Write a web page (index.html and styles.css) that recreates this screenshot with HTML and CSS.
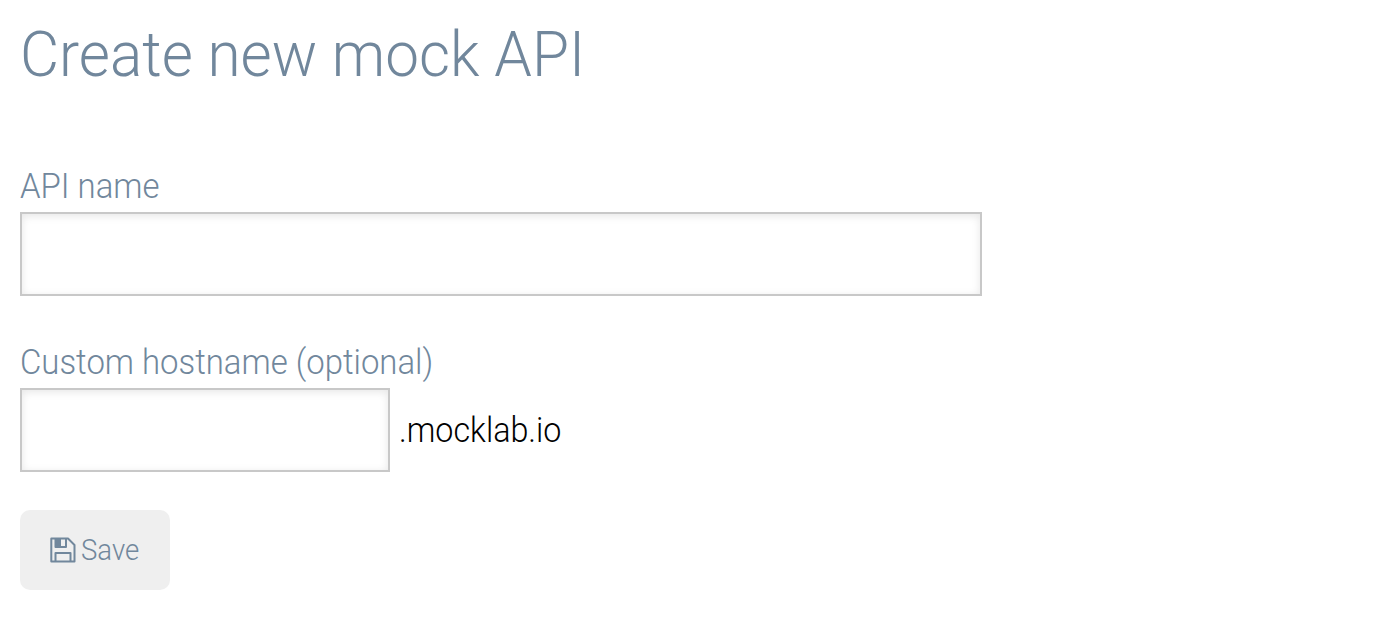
FILE: index.html
```html
<!DOCTYPE html>
<html lang="en">
<head>
<meta charset="utf-8">
<title>Create new mock API</title>
<link rel="stylesheet" href="styles.css">
</head>
<body>
<main class="page">
  <h1 class="title">Create new mock API</h1>
  <form class="form">
    <div class="field">
      <label class="label" for="name">API name</label>
      <input class="input" id="name" type="text">
    </div>
    <div class="field field-host">
      <label class="label" for="host">Custom hostname (optional)</label>
      <div class="host-row">
        <input class="input input-host" id="host" type="text">
        <span class="suffix">.mocklab.io</span>
      </div>
    </div>
    <button class="save" type="button">
      <svg class="icon" viewBox="0 0 26 26" fill="none" stroke="currentColor" stroke-width="2" stroke-linejoin="round">
        <path d="M1.300 1.500H18L24.500 8V24.500H1.300Z"/>
        <path d="M5.500 24V16H20.500V24"/>
        <path d="M5.500 2V10H16V2"/>
        <path d="M5 1.500H11V10H5Z" fill="currentColor" stroke="none"/>
      </svg>
      <span class="save-text">Save</span>
    </button>
  </form>
</main>
</body>
</html>
```
FILE: styles.css
```css
body {
  margin: 0;
  background: #fff;
  color: #71879c;
  font-family: Roboto, "Open Sans", sans-serif;
  font-weight: 300;
}
.page {
  padding: 15px 20px 0;
}
/* Slightly condensed lettering */
.title,
.label,
.suffix,
.save-text {
  transform-origin: left center;
}
.title {
  margin: 0;
  height: 80px;
  font-size: 63px;
  line-height: 80px;
  font-weight: 300;
  white-space: nowrap;
  transform: scaleX(0.956);
}
.form {
  display: flex;
  flex-direction: column;
  align-items: flex-start;
  margin-top: 67px;
}
.field {
  display: flex;
  flex-direction: column;
  margin-bottom: 42px;
}
.field-host {
  margin-bottom: 38px;
}
.label {
  height: 50px;
  font-size: 35px;
  line-height: 50px;
  white-space: nowrap;
  transform: scaleX(0.94);
}
.input {
  box-sizing: border-box;
  width: 962px;
  height: 84px;
  padding: 12px;
  border: 2px solid #c8c8c8;
  border-radius: 0;
  background: #fff;
  box-shadow: inset 0 2px 8px rgba(0, 0, 0, 0.1);
  font: inherit;
  font-size: 35px;
  outline: none;
}
.input-host {
  width: 370px;
}
.host-row {
  display: flex;
  align-items: center;
  gap: 9px;
}
.suffix {
  padding-top: 2px;
  color: #000;
  font-size: 35px;
  line-height: 48px;
  transform: scaleX(0.922);
}
.save {
  display: flex;
  align-items: center;
  gap: 5px;
  box-sizing: border-box;
  width: 150px;
  height: 80px;
  padding: 0 0 0 30px;
  border: 0;
  border-radius: 10px;
  background: #efefef;
  color: inherit;
  font: inherit;
  font-size: 29px;
}
.save-text {
  transform: scaleX(0.95);
}
.icon {
  flex: none;
  width: 26px;
  height: 26px;
}
```
